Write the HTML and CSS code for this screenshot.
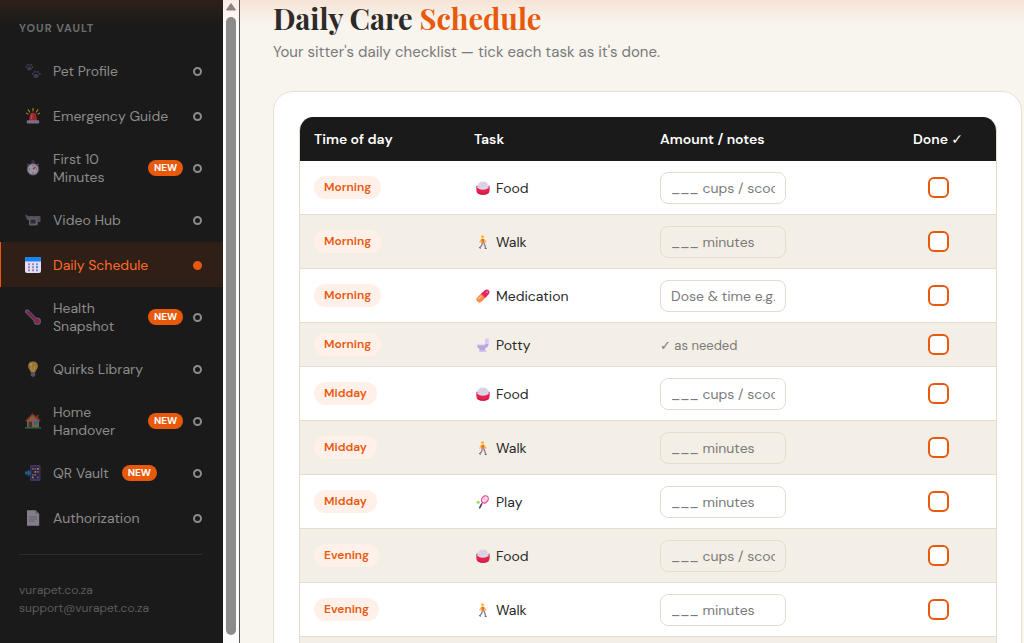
FILE: index.html
```
<!DOCTYPE html>
<html lang="en">
<head>
    <meta charset="UTF-8">
    <meta name="viewport" content="width=device-width, initial-scale=1.0">
    <title>Daily Care Schedule</title>
    <link rel="stylesheet" href="styles.css">
</head>
<body>
    <!-- Icon set -->
    <svg class="icon-defs" width="0" height="0" aria-hidden="true">
        <symbol id="i-paws" viewBox="0 0 16 16">
            <g fill="#5d4a78">
                <ellipse cx="4.4" cy="5.6" rx="2.4" ry="1.9"/><circle cx="1.3" cy="3.8" r="1"/><circle cx="3.2" cy="1.8" r="1.1"/><circle cx="5.8" cy="1.9" r="1.1"/><circle cx="7.5" cy="4" r="1"/>
                <ellipse cx="11.2" cy="13" rx="2.7" ry="2.1"/><circle cx="7.9" cy="10.8" r="1.1"/><circle cx="10" cy="8.8" r="1.1"/><circle cx="12.8" cy="8.9" r="1.1"/><circle cx="14.7" cy="11" r="1.1"/>
            </g>
        </symbol>
        <symbol id="i-siren" viewBox="0 0 16 16">
            <path d="M3.7 13l1.2-6.5Q5.3 4.600 8 4.600t3.100 1.900L12.300 13z" fill="#f0303c"/>
            <path d="M6.300 11l.7-4.600" stroke="#ff8a80" stroke-width="1.200"/>
            <rect x="1.800" y="12.300" width="12.400" height="3.200" rx=".8" fill="#b9a6cf"/>
            <path d="M8 .3v2.600M3.200 1.800l1.500 2.200M12.800 1.800l-1.500 2.200M1.400 5.200l1.600.8M14.600 5.200l-1.600.8" stroke="#ffc42e" stroke-width="1.200" stroke-linecap="round"/>
        </symbol>
        <symbol id="i-watch" viewBox="0 0 16 16">
            <rect x="6.500" y=".3" width="3" height="3" rx=".6" fill="#54456b"/>
            <path d="M2.300 3.800l2 2M13.700 3.800l-2 2" stroke="#6b5a86" stroke-width="1.800"/>
            <circle cx="8" cy="9.200" r="6.300" fill="#7d6b96"/>
            <circle cx="8" cy="9.200" r="5.200" fill="#eee8f6"/>
            <path d="M8 9.300l2.800-2.700" stroke="#e0355c" stroke-width="1.200"/>
            <path d="M8 5v1.200M8 12.400v1.200M3.800 9.200H5M11 9.200h1.200" stroke="#54456b" stroke-width=".8"/>
        </symbol>
        <symbol id="i-video" viewBox="0 0 16 16">
            <path d="M0 2.500l3 1v3H1z" fill="#6d6278"/>
            <path d="M2 4h12.500q1 0 1 1v5h-2.500v3H5V8H2z" fill="#7b7185"/>
            <rect x="4" y="6" width="8" height="7.500" rx="1" fill="#92889d"/>
            <rect x="5.500" y="7.500" width="5" height="4" fill="#3f3749"/>
        </symbol>
        <symbol id="i-calendar" viewBox="0 0 16 16">
            <rect width="16" height="16" rx="2" fill="#e6dcf6"/>
            <path d="M2 0h12q2 0 2 2v2.600H0V2q0-2 2-2z" fill="#1784f2"/>
            <g fill="#9a89b5"><path d="M3 6.200h2v2H3zM7 6.200h2v2H7zM11 6.200h2v2h-2zM3 9.200h2v2H3zM7 9.200h2v2H7zM3 12.200h2v2H3zM7 12.200h2v2H7zM11 12.200h2v2h-2z"/></g>
            <rect x="11" y="9.200" width="2" height="2" fill="#0aa0ff"/>
        </symbol>
        <symbol id="i-thermo" viewBox="0 0 16 16">
            <path d="M2.200 2.500l10 10" stroke="#7a87ad" stroke-width="4.400" stroke-linecap="round"/>
            <circle cx="12.300" cy="12.300" r="3.700" fill="#7a87ad"/>
            <path d="M2.600 2.900l9.600 9.600" stroke="#d8205f" stroke-width="2.200" stroke-linecap="round"/>
            <circle cx="12.200" cy="12.200" r="2.500" fill="#e02457"/>
            <path d="M5 2.900L3.800 4.100M7.200 5.100L6 6.300M9.400 7.300L8.200 8.500" stroke="#251b3c" stroke-width=".6"/>
        </symbol>
        <symbol id="i-bulb" viewBox="0 0 16 16">
            <path d="M8 .4q4.900 0 4.900 4.900c0 2.800-2.300 3.600-2.700 6.200H5.800C5.400 8.900 3.100 8.100 3.100 5.300Q3.100.4 8 .4z" fill="#eeb044"/>
            <path d="M6.300 5.300L7.300 11M9.700 5.300L8.700 11" stroke="#ffdf80" stroke-width=".9"/>
            <circle cx="6" cy="3.600" r="1.300" fill="#ffe49d"/>
            <path d="M5.800 11.500h4.400v2.800l-1.200 1.500H7l-1.200-1.500z" fill="#85769a"/>
        </symbol>
        <symbol id="i-house" viewBox="0 0 16 16">
            <path d="M11.500 1.800h2v5h-2z" fill="#b33a38"/>
            <path d="M2 7l5.500-5.500L14 7v7.500H2z" fill="#c98b66"/>
            <path d="M.8 8.200L7.500 1.300l7.700 6.900" stroke="#c94535" stroke-width="1.600" fill="none"/>
            <rect x="3.600" y="8.800" width="3.400" height="5.700" fill="#6a3f39"/>
            <rect x="9.200" y="8.200" width="3.600" height="3.400" fill="#2d9ce0"/>
            <path d="M0 14h16v1.600H0z" fill="#2f8f59"/>
        </symbol>
        <symbol id="i-phone" viewBox="0 0 16 16">
            <rect x="5" y="0" width="10.500" height="16" rx="1.200" fill="#5a4390"/>
            <rect x="6.200" y="1.800" width="8.100" height="12" fill="#382a62"/>
            <path d="M7 3h1.700v1.700H7zM12 6h1.700v1.700H12zM9.500 9h1.700v1.700H9.500z" fill="#f28a2e"/>
            <path d="M9.500 3h1.700v1.700H9.500zM7 9h1.700v1.700H7zM12 11.500h1.700v1.700H12z" fill="#38a7ed"/>
            <path d="M12 3h1.700v1.700H12zM9.500 6h1.700v1.700H9.500zM7 11.500h1.700v1.700H7z" fill="#ffd05b"/>
            <path d="M0 6.600h2.800V4.200L6.600 8l-3.800 3.800V9.400H0z" fill="#2287c8"/>
        </symbol>
        <symbol id="i-page" viewBox="0 0 16 16">
            <path d="M2 .2h8.600l3.600 3.600v12H2z" fill="#c8bfd4"/>
            <path d="M10.600.2l3.600 3.600h-3.600z" fill="#9387a2"/>
            <path d="M4 6.800h8M4 9h8M4 11.200h5.500" stroke="#9387a2" stroke-width=".9"/>
        </symbol>
        <symbol id="i-food" viewBox="0 0 16 16">
            <path d="M.4 5.500h15.200v4.500q0 5.600-5.600 5.600H6Q.4 15.600.4 10z" fill="#e6234f"/>
            <path d="M1.500 7.200Q1.500.5 8 .5t6.500 6.700Q13.500 10 8 10T1.500 7.200z" fill="#ddd6e6"/>
            <path d="M2.500 13.200q2 2 5.500 2t5.500-2" fill="none" stroke="#b3184a" stroke-width="1"/>
            <g fill="#bdb1cf"><circle cx="6" cy="3.500" r=".6"/><circle cx="9.500" cy="2.800" r=".6"/><circle cx="8" cy="5.800" r=".6"/><circle cx="11.400" cy="5.600" r=".6"/><circle cx="4.300" cy="6.400" r=".6"/></g>
        </symbol>
        <symbol id="i-walk" viewBox="0 0 16 16">
            <circle cx="7.500" cy="2" r="1.700" fill="#ffb52e"/>
            <path d="M6.200 5L4.400 8.200M9.200 5.400l2.300 2.800" stroke="#ffb52e" stroke-width="1.300" stroke-linecap="round"/>
            <path d="M6.200 4.200h3l.4 4.600H6.200z" fill="#f3701e"/>
            <path d="M7.200 8.600l-.6 3.200-2.200 2.800M8.800 8.600l1.200 2.800.9 3.400" stroke="#857a9a" stroke-width="1.500" fill="none"/>
            <path d="M3.600 14.200l1.600 1.400M10 15.300h2.200" stroke="#3d3350" stroke-width="1"/>
        </symbol>
        <symbol id="i-pill" viewBox="0 0 16 16">
            <path d="M4.100 11.900l4-4" stroke="#ff8a4d" stroke-width="7" stroke-linecap="round"/>
            <path d="M5.700 5.400l4.600-4.200q2.400-1.500 4.200.3t.3 4.200l-4.300 4.600z" fill="#e82761"/>
            <path d="M3 11.200l3-3" stroke="#ffc078" stroke-width="1.500" stroke-linecap="round"/>
            <circle cx="12.700" cy="3.500" r="1" fill="#ff86aa"/>
        </symbol>
        <symbol id="i-toilet" viewBox="0 0 16 16">
            <path d="M10.200.5h4.300v8h-4.300z" fill="#d8caf0"/>
            <path d="M.8 6.800h13.400q-.4 4-3.800 5.200v3.500H4v-2.700Q1 11 .8 6.800z" fill="#bba6df"/>
            <path d="M.8 6.800h9.400v1.500H1z" fill="#e5dbf6"/>
            <path d="M4 14h8v1.600H4z" fill="#cfbfea"/>
        </symbol>
        <symbol id="i-racket" viewBox="0 0 16 16">
            <ellipse cx="10.200" cy="5" rx="3.500" ry="4.400" transform="rotate(35 10.200 5)" fill="#f6e4f0" stroke="#ec4a91" stroke-width="1.300"/>
            <path d="M8.200 3.500l4.200 3M10 2l-2 5M12.500 3l-3 5" stroke="#d7a6c4" stroke-width=".5"/>
            <path d="M7.500 8.500L6 11" stroke="#ec4a91" stroke-width="1.500"/>
            <path d="M6.200 10.700l-2 4" stroke="#54406e" stroke-width="1.900" stroke-linecap="round"/>
            <circle cx="2.500" cy="8.300" r="1.800" fill="#8fdf52"/>
        </symbol>
    </svg>

    <div class="app">
        <aside class="sidebar">
            <div class="sidebar-content">
                <h2 class="sidebar-title">Your Vault</h2>
                <nav class="sidebar-nav">
                    <a class="nav-item" href="#profile"><svg class="nav-icon"><use href="#i-paws"/></svg><span class="nav-label">Pet Profile</span><span class="dot"></span></a>
                    <a class="nav-item" href="#emergency"><svg class="nav-icon"><use href="#i-siren"/></svg><span class="nav-label">Emergency Guide</span><span class="dot"></span></a>
                    <a class="nav-item" href="#first10"><svg class="nav-icon"><use href="#i-watch"/></svg><span class="nav-label wrap">First 10 Minutes</span><span class="badge">NEW</span><span class="dot"></span></a>
                    <a class="nav-item" href="#video"><svg class="nav-icon"><use href="#i-video"/></svg><span class="nav-label">Video Hub</span><span class="dot"></span></a>
                    <a class="nav-item active" href="#schedule"><svg class="nav-icon"><use href="#i-calendar"/></svg><span class="nav-label">Daily Schedule</span><span class="dot"></span></a>
                    <a class="nav-item" href="#health"><svg class="nav-icon"><use href="#i-thermo"/></svg><span class="nav-label wrap">Health Snapshot</span><span class="badge">NEW</span><span class="dot"></span></a>
                    <a class="nav-item" href="#quirks"><svg class="nav-icon"><use href="#i-bulb"/></svg><span class="nav-label">Quirks Library</span><span class="dot"></span></a>
                    <a class="nav-item" href="#home"><svg class="nav-icon"><use href="#i-house"/></svg><span class="nav-label wrap">Home Handover</span><span class="badge">NEW</span><span class="dot"></span></a>
                    <a class="nav-item" href="#qr"><svg class="nav-icon"><use href="#i-phone"/></svg><span class="nav-label">QR Vault</span><span class="badge">NEW</span><span class="dot"></span></a>
                    <a class="nav-item" href="#authorization"><svg class="nav-icon"><use href="#i-page"/></svg><span class="nav-label">Authorization</span><span class="dot"></span></a>
                </nav>
                <div class="sidebar-footer">
                    <a href="#site">vurapet.co.za</a>
                    <a href="#support">support@vurapet.co.za</a>
                </div>
            </div>
            <div class="scrollbar" aria-hidden="true">
                <svg class="scroll-arrow" viewBox="0 0 10 8"><path d="M5 .5L9.500 7H.5z" fill="#8b8583" stroke="#8b8583" stroke-linejoin="round"/></svg>
                <div class="scroll-thumb"></div>
            </div>
        </aside>

        <main class="main">
            <h1>Daily Care <span>Schedule</span></h1>
            <p class="subtitle">Your sitter's daily checklist — tick each task as it's done.</p>

            <section class="card">
                <div class="table-wrap">
                    <table>
                        <colgroup>
                            <col class="col-time">
                            <col class="col-task">
                            <col>
                            <col class="col-done">
                        </colgroup>
                        <thead>
                            <tr><th>Time of day</th><th>Task</th><th>Amount / notes</th><th class="done">Done <span class="check">✓</span></th></tr>
                        </thead>
                        <tbody>
                            <tr>
                                <td><span class="pill">Morning</span></td>
                                <td><span class="task"><svg><use href="#i-food"/></svg>Food</span></td>
                                <td><input type="text" aria-label="Morning food amount" placeholder="___ cups / scoops"></td>
                                <td class="done"><input type="checkbox" aria-label="Morning food done"></td>
                            </tr>
                            <tr>
                                <td><span class="pill">Morning</span></td>
                                <td><span class="task"><svg><use href="#i-walk"/></svg>Walk</span></td>
                                <td><input type="text" aria-label="Morning walk length" placeholder="___ minutes"></td>
                                <td class="done"><input type="checkbox" aria-label="Morning walk done"></td>
                            </tr>
                            <tr>
                                <td><span class="pill">Morning</span></td>
                                <td><span class="task"><svg><use href="#i-pill"/></svg>Medication</span></td>
                                <td><input type="text" aria-label="Morning medication dose" placeholder="Dose &amp; time e.g. 8am"></td>
                                <td class="done"><input type="checkbox" aria-label="Morning medication done"></td>
                            </tr>
                            <tr class="short">
                                <td><span class="pill">Morning</span></td>
                                <td><span class="task"><svg><use href="#i-toilet"/></svg>Potty</span></td>
                                <td><span class="note"><span class="check">✓</span> as needed</span></td>
                                <td class="done"><input type="checkbox" aria-label="Morning potty done"></td>
                            </tr>
                            <tr>
                                <td><span class="pill">Midday</span></td>
                                <td><span class="task"><svg><use href="#i-food"/></svg>Food</span></td>
                                <td><input type="text" aria-label="Midday food amount" placeholder="___ cups / scoops"></td>
                                <td class="done"><input type="checkbox" aria-label="Midday food done"></td>
                            </tr>
                            <tr>
                                <td><span class="pill">Midday</span></td>
                                <td><span class="task"><svg><use href="#i-walk"/></svg>Walk</span></td>
                                <td><input type="text" aria-label="Midday walk length" placeholder="___ minutes"></td>
                                <td class="done"><input type="checkbox" aria-label="Midday walk done"></td>
                            </tr>
                            <tr>
                                <td><span class="pill">Midday</span></td>
                                <td><span class="task"><svg><use href="#i-racket"/></svg>Play</span></td>
                                <td><input type="text" aria-label="Midday play length" placeholder="___ minutes"></td>
                                <td class="done"><input type="checkbox" aria-label="Midday play done"></td>
                            </tr>
                            <tr>
                                <td><span class="pill">Evening</span></td>
                                <td><span class="task"><svg><use href="#i-food"/></svg>Food</span></td>
                                <td><input type="text" aria-label="Evening food amount" placeholder="___ cups / scoops"></td>
                                <td class="done"><input type="checkbox" aria-label="Evening food done"></td>
                            </tr>
                            <tr>
                                <td><span class="pill">Evening</span></td>
                                <td><span class="task"><svg><use href="#i-walk"/></svg>Walk</span></td>
                                <td><input type="text" aria-label="Evening walk length" placeholder="___ minutes"></td>
                                <td class="done"><input type="checkbox" aria-label="Evening walk done"></td>
                            </tr>
                            <tr>
                                <td></td>
                                <td></td>
                                <td></td>
                                <td></td>
                            </tr>
                        </tbody>
                    </table>
                </div>
            </section>
        </main>
    </div>
</body>
</html>
```
FILE: styles.css
```
* {
    box-sizing: border-box;
}
body {
    margin: 0;
    font-family: "DM Sans", Inter, sans-serif;
    font-size: 14px;
    color: #2a2a2a;
    background-color: #f8f4ee;
}
.icon-defs {
    display: none;
}
.app {
    display: flex;
    height: 100vh;
    overflow: hidden;
    position: relative;
}
/* glow under the top bar */
.app::before {
    content: "";
    position: absolute;
    top: 0;
    left: 0;
    right: 0;
    height: 24px;
    background: linear-gradient(rgba(232, 89, 12, 0.1), rgba(232, 89, 12, 0));
    pointer-events: none;
    z-index: 1;
}

/* Sidebar */
.sidebar {
    display: flex;
    flex: none;
    width: 240px;
    background-color: #1a1a1a;
    border-right: 1px solid #55555c;
}
.sidebar-content {
    flex: 1;
    padding-top: 20px;
}
.sidebar-title {
    margin: 0 19px 12px;
    font-size: 11px;
    line-height: 16px;
    font-weight: 700;
    letter-spacing: 1px;
    text-transform: uppercase;
    color: #6b6b6b;
}
.nav-item {
    display: flex;
    align-items: center;
    padding: 12px 21px 11px 22px;
    border-left: 1px solid transparent;
    line-height: 18px;
    color: #8c8c8c;
    text-decoration: none;
}
.nav-icon {
    flex: none;
    width: 20px;
    height: 22px;
    padding: 3px 2px;
    margin-right: 10px;
    opacity: 0.6;
}
.nav-label.wrap {
    width: 82px;
}
.badge {
    flex: none;
    margin-left: 13px;
    padding: 0 6px;
    border-radius: 8px;
    background-color: #e8590c;
    color: #fff;
    font-size: 10px;
    line-height: 16px;
    font-weight: 700;
}
.dot {
    flex: none;
    width: 9px;
    height: 9px;
    margin-left: auto;
    border: 2px solid #8c8c8c;
    border-radius: 50%;
}
.nav-item.active {
    background-color: #2f1f17;
    border-left-color: #e8590c;
    color: #ff6b2b;
}
.active .nav-icon {
    opacity: 1;
}
.active .dot {
    border-color: #e8590c;
    background-color: #e8590c;
}
.sidebar-footer {
    display: flex;
    flex-direction: column;
    margin: 14px 21px 0 19px;
    padding-top: 26px;
    border-top: 1px solid #2c2c2c;
}
.sidebar-footer a {
    font-size: 12px;
    line-height: 18px;
    color: #5c5c5c;
    text-decoration: none;
}
.scrollbar {
    display: flex;
    flex-direction: column;
    align-items: center;
    width: 16px;
    padding: 3px 0 8px;
    background-color: #fcfcfc;
}
.scroll-arrow {
    width: 10px;
    height: 8px;
    margin-bottom: 6px;
}
.scroll-thumb {
    flex: 1;
    width: 10px;
    border-radius: 5px;
    background-color: #8b8b8b;
}

/* Main */
.main {
    flex: 1;
    min-width: 0;
    padding: 0 2px 0 33px;
}
h1 {
    margin: 0;
    font-family: "Playfair Display", "Liberation Serif", serif;
    font-size: 29px;
    line-height: 36px;
    font-weight: 700;
}
h1 span {
    color: #e8590c;
}
.subtitle {
    margin: 6px 0 29px;
    font-size: 15px;
    line-height: 20px;
    color: #7a7a7a;
}
.card {
    padding: 25px 24px 25px 25px;
    background-color: #fff;
    border: 1px solid #e8e0d5;
    border-radius: 20px;
}
.table-wrap {
    border: 1px solid #e3dccf;
    border-top: 0;
    border-radius: 14px;
    overflow: hidden;
}
table {
    width: 100%;
    border-collapse: separate;
    border-spacing: 0;
    table-layout: fixed;
}
.col-time {
    width: 160px;
}
.col-task {
    width: 186px;
}
.col-done {
    width: 116px;
}
th {
    height: 44px;
    padding: 0 14px;
    background-color: #1a1a1a;
    color: #fff;
    font-size: 14px;
    font-weight: 600;
    text-align: left;
}
td {
    height: 54px;
    padding: 0 14px;
    border-bottom: 1px solid #e3dccf;
}
.short td {
    height: 44px;
}
tbody tr:nth-child(even) {
    background-color: #f4efe6;
}
th.done,
td.done {
    text-align: center;
}
.check {
    font-family: "DejaVu Sans", sans-serif;
    line-height: 1;
}
.pill {
    display: inline-block;
    padding: 0 10px;
    border-radius: 12px;
    background-color: #fff1ea;
    color: #e8590c;
    font-size: 12px;
    line-height: 23px;
    font-weight: 600;
}
.task {
    display: flex;
    align-items: center;
    gap: 6px;
}
.task svg {
    width: 14px;
    height: 14px;
    margin-left: 2px;
}
.note {
    font-size: 13px;
    color: #7a7a7a;
}
input[type="text"] {
    display: block;
    width: 126px;
    height: 32px;
    padding: 0 10px;
    border: 1px solid #e3dccf;
    border-radius: 8px;
    background-color: transparent;
    font-family: inherit;
    font-size: 14px;
}
input[type="text"]::placeholder {
    color: #7a7a7a;
}
input[type="checkbox"] {
    appearance: none;
    display: block;
    width: 21px;
    height: 21px;
    margin: 0 auto;
    border: 2px solid #e8590c;
    border-radius: 6px;
    background-color: #fff;
}
```
